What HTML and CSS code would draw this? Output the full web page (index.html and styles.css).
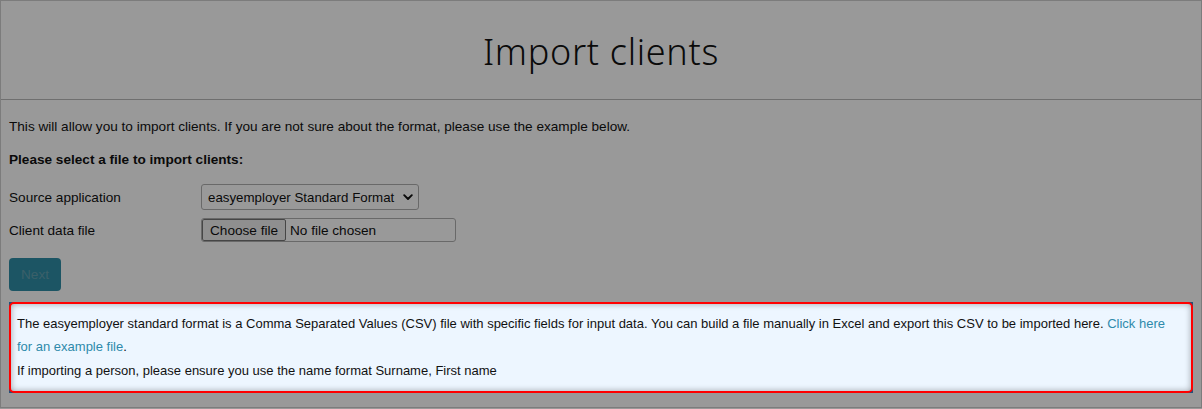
FILE: index.html
```html
<!DOCTYPE html>
<html lang="en">
<head>
<meta charset="utf-8">
<title>Import clients</title>
<link rel="stylesheet" href="styles.css">
</head>
<body>
<div class="page">
  <header class="page-head">
    <h1 class="page-title">Import clients</h1>
  </header>
  <main class="page-body">
    <p class="intro">This will allow you to import clients. If you are not sure about the format, please use the example below.</p>
    <p class="lead">Please select a file to import clients:</p>
    <div class="form-row">
      <label class="form-label" for="src">Source application</label>
      <div class="select-wrap">
        <select id="src" class="form-select">
          <option>easyemployer Standard Format</option>
        </select>
        <svg class="select-chevron" width="10" height="7" viewBox="0 0 10 7" aria-hidden="true">
          <path d="M1.2 1.2 L5 5 L8.8 1.2" fill="none" stroke="#111" stroke-width="1.9" stroke-linecap="round" stroke-linejoin="round"/>
        </svg>
      </div>
    </div>
    <div class="form-row">
      <label class="form-label" for="file">Client data file</label>
      <label class="file-field" for="file">
        <span class="file-btn">Choose file</span>
        <span class="file-name">No file chosen</span>
        <input id="file" class="file-input" type="file">
      </label>
    </div>
    <div class="actions">
      <button class="btn-next" type="button" disabled>Next</button>
    </div>
    <div class="tour-target">
      <div class="info-box">
        <p class="info-line">The easyemployer standard format is a Comma Separated Values (CSV) file with specific fields for input data. You can build a file manually in Excel and export this CSV to be imported here. <a href="#" class="info-link">Click here for an example file</a>.</p>
        <p class="info-line">If importing a person, please ensure you use the name format Surname, First name</p>
      </div>
    </div>
  </main>
</div>
<div class="overlay"></div>
</body>
</html>
```
FILE: styles.css
```css
html, body {
  margin: 0;
  padding: 0;
  background: #fff;
}
body {
  font-family: "Liberation Sans", Arial, sans-serif;
  font-size: 13.6px;
  color: #111;
}
.page {
  box-sizing: border-box;
  width: 1202px;
  height: 408px;
  border: 1px solid #cfcfcf;
  background: #fff;
}
.page-head {
  height: 98px;
  border-bottom: 1px solid #b9b9b9;
  display: flex;
  align-items: center;
  justify-content: center;
}
.page-title {
  margin: 0;
  font-family: "Noto Sans", "Open Sans", sans-serif;
  font-weight: 300;
  font-size: 36px;
  color: #111;
  letter-spacing: 0.7px;
  padding-top: 2px;
}
.page-body {
  padding: 17px 8px 0 8px;
}
.intro {
  margin: 0 0 13px;
  line-height: 20px;
}
.lead {
  margin: 0 0 14px;
  line-height: 20px;
  font-weight: bold;
}
.form-row {
  display: flex;
  align-items: center;
  height: 26px;
  margin-bottom: 7px;
}
.form-label {
  width: 192px;
  flex: none;
}
.select-wrap {
  position: relative;
  width: 218px;
  height: 26px;
}
.form-select {
  appearance: none;
  -webkit-appearance: none;
  box-sizing: border-box;
  font-family: "Liberation Sans", Arial, sans-serif;
  font-size: 13.3px;
  height: 26px;
  width: 218px;
  border: 1px solid #b0b0b0;
  border-radius: 3px;
  background: #fff;
  color: #111;
  padding: 0 18px 0 6px;
  margin: 0;
}
.select-chevron {
  position: absolute;
  right: 6px;
  top: 10px;
  pointer-events: none;
}
.file-field {
  box-sizing: border-box;
  display: flex;
  align-items: center;
  width: 255px;
  height: 24px;
  border: 1px solid #b0b0b0;
  border-radius: 3px;
  background: #fff;
  overflow: hidden;
}
.file-btn {
  box-sizing: border-box;
  height: 22px;
  display: flex;
  align-items: center;
  padding: 0 7px;
  border: 1px solid #767676;
  border-radius: 2px;
  background: #efefef;
  color: #111;
  margin-right: 4px;
}
.file-name {
  color: #111;
}
.file-input {
  display: none;
}
.actions {
  padding-top: 8px;
  margin-bottom: 11px;
}
.btn-next {
  font-family: "Liberation Sans", Arial, sans-serif;
  font-size: 13.6px;
  height: 33px;
  width: 52px;
  padding: 0;
  border: none;
  border-radius: 4px;
  background: #2f8ea7;
  color: #62a0b0;
}
.tour-target {
  position: relative;
  z-index: 20;
  background: #24507a;
  height: 91px;
}
.info-box {
  box-sizing: border-box;
  height: 91px;
  border: 2px solid #f00;
  border-radius: 5px;
  background: #edf6ff;
  box-shadow: inset 0 0 6px rgba(0, 0, 0, 0.35);
  padding: 8px 14px 0 6px;
  color: #111;
  font-size: 13px;
}
.info-line {
  margin: 0 0 1px;
  line-height: 23px;
}
.info-link {
  color: #2e8aab;
  text-decoration: none;
}
.overlay {
  position: fixed;
  inset: 0;
  z-index: 10;
  background: rgba(0, 0, 0, 0.4);
}
```
